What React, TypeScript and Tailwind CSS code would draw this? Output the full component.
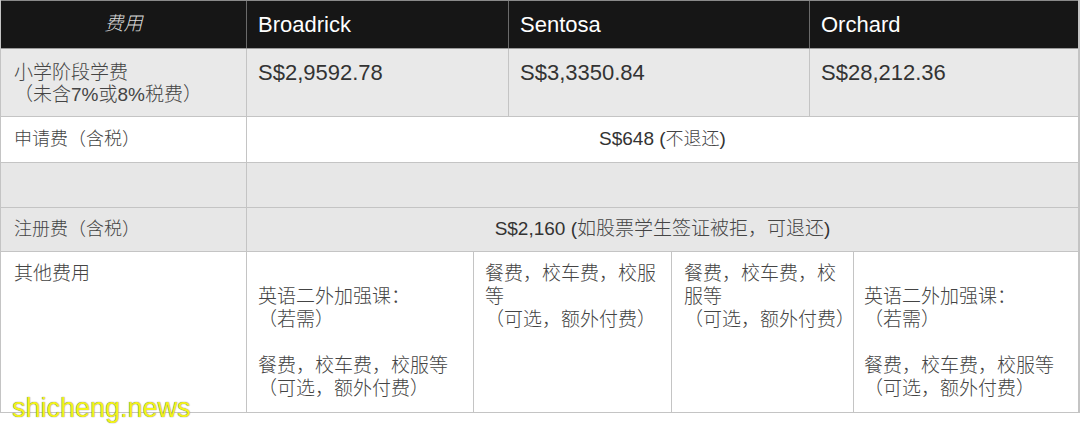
import React from "react";

const cjk = "font-['Liberation_Sans','Noto_Sans_CJK_SC',sans-serif]";

function Lines({ lines }: { lines: string[] }) {
  return (
    <div className="flex flex-col">
      {lines.map((l, i) => (
        <div key={i} className="h-[23px] leading-[23px] whitespace-nowrap">
          {l === "" ? "\u00a0" : l}
        </div>
      ))}
    </div>
  );
}

export default function App() {
  return (
    <div className={`relative w-[1080px] h-[426px] bg-white overflow-hidden text-[#333] ${cjk}`}>
      <div className="border-l border-r-2 border-[#c4c4c4]">
        {/* Header */}
        <div className="grid grid-cols-[246px_262px_301px_1fr] h-[49px] bg-[#161616] border-t border-b border-t-[#8a8a8a] border-b-[#9a9a9a] text-white">
          <div className="flex items-center justify-center border-r border-[#6a6a6a] italic text-[19px] text-[#d8d8d8] font-light">
            费用
          </div>
          <div className="flex items-center pl-[11px] border-r border-[#6a6a6a] text-[22px]">Broadrick</div>
          <div className="flex items-center pl-[11px] border-r border-[#6a6a6a] text-[22px]">Sentosa</div>
          <div className="flex items-center pl-[11px] text-[22px]">Orchard</div>
        </div>

        {/* Row 2 */}
        <div className="grid grid-cols-[246px_262px_301px_1fr] h-[68px] bg-[#e9e9e9] border-b border-[#c4c4c4]">
          <div className="pl-[13px] pt-[13px] border-r border-[#c4c4c4] text-[19px] leading-[22px] font-light text-[#444]">
            <div>小学阶段学费</div>
            <div>（未含7%或8%税费）</div>
          </div>
          <div className="pl-[11px] pt-[13px] border-r border-[#c4c4c4] text-[22px] leading-[22px]">S$2,9592.78</div>
          <div className="pl-[11px] pt-[13px] border-r border-[#c4c4c4] text-[22px] leading-[22px]">S$3,3350.84</div>
          <div className="pl-[11px] pt-[13px] text-[22px] leading-[22px]">S$28,212.36</div>
        </div>

        {/* Row 3 */}
        <div className="grid grid-cols-[246px_1fr] h-[46px] bg-white border-b border-[#c4c4c4]">
          <div className="flex items-center pl-[13px] border-r border-[#c4c4c4] text-[18px] font-light text-[#444]">
            申请费（含税）
          </div>
          <div className="flex items-center justify-center text-[19px]">
            S$648 (<span className="text-[18px] font-light text-[#444]">不退还</span>)
          </div>
        </div>

        {/* Row 4 */}
        <div className="grid grid-cols-[246px_1fr] h-[45px] bg-[#e7e7e7] border-b border-[#c4c4c4]">
          <div className="border-r border-[#c4c4c4]" />
          <div />
        </div>

        {/* Row 5 */}
        <div className="grid grid-cols-[246px_1fr] h-[44px] bg-[#e7e7e7] border-b border-[#c4c4c4]">
          <div className="flex items-center pl-[13px] border-r border-[#c4c4c4] text-[18px] font-light text-[#444]">
            注册费（含税）
          </div>
          <div className="flex items-center justify-center text-[19px]">
            S$2,160 (<span className="text-[19px] font-light text-[#444]">如股票学生签证被拒，可退还</span>)
          </div>
        </div>

        {/* Row 6 */}
        <div className="grid grid-cols-[246px_227px_198px_182px_1fr] h-[161px] bg-white border-b border-[#c4c4c4] text-[19px] font-light text-[#444]">
          <div className="pl-[13px] pt-[10px] border-r border-[#c4c4c4]">
            <Lines lines={["其他费用"]} />
          </div>
          <div className="pl-[11px] pt-[10px] border-r border-[#c4c4c4]">
            <Lines lines={["", "英语二外加强课：", "（若需）", "", "餐费，校车费，校服等", "（可选，额外付费）"]} />
          </div>
          <div className="pl-[11px] pt-[10px] border-r border-[#c4c4c4]">
            <Lines lines={["餐费，校车费，校服", "等", "（可选，额外付费）"]} />
          </div>
          <div className="pl-[12px] pt-[10px] border-r border-[#c4c4c4] overflow-visible">
            <Lines lines={["餐费，校车费，校", "服等", "（可选，额外付费）"]} />
          </div>
          <div className="pl-[10px] pt-[10px]">
            <Lines lines={["", "英语二外加强课：", "（若需）", "", "餐费，校车费，校服等", "（可选，额外付费）"]} />
          </div>
        </div>
      </div>

      {/* Watermark */}
      <div className="absolute left-[12px] top-[393px] text-[27px] leading-[30px] text-[#f3f31a] font-['Liberation_Sans',sans-serif] [text-shadow:0_0_1px_#444]">
        shicheng.news
      </div>
    </div>
  );
}
